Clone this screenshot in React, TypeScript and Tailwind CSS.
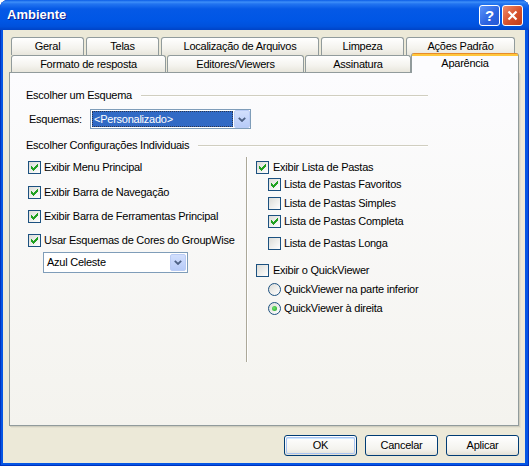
import React from "react";

function CheckMark() {
  return (
    <svg className="absolute left-0 top-0" width="11" height="11" viewBox="0 0 11 11" shapeRendering="crispEdges">
      <g fill="#21A121">
        <rect x="8" y="2" width="1" height="1" />
        <rect x="7" y="3" width="2" height="1" />
        <rect x="2" y="4" width="1" height="1" />
        <rect x="6" y="4" width="3" height="1" />
        <rect x="2" y="5" width="2" height="1" />
        <rect x="5" y="5" width="3" height="1" />
        <rect x="2" y="6" width="5" height="1" />
        <rect x="3" y="7" width="3" height="1" />
        <rect x="4" y="8" width="1" height="1" />
      </g>
    </svg>
  );
}

function Box({ checked }: { checked: boolean }) {
  return (
    <span className="relative block w-[13px] h-[13px] shrink-0 border border-[#1C5180] bg-[linear-gradient(135deg,#DCDCD7,#FFFFFF)]">
      {checked && <CheckMark />}
    </span>
  );
}

function Radio({ selected }: { selected: boolean }) {
  return (
    <span className="flex w-[13px] h-[13px] shrink-0 items-center justify-center rounded-full border border-[#1C5180] bg-[linear-gradient(135deg,#DCDCD7,#FFFFFF)]">
      {selected && <span className="block w-[5px] h-[5px] rounded-full bg-[radial-gradient(circle_at_40%_40%,#6EE36E,#21A121)]" />}
    </span>
  );
}

function CheckRow({ checked, label, gap = "ml-[3px]" }: { checked: boolean; label: string; gap?: string }) {
  return (
    <div className="flex h-[13px] items-center">
      <Box checked={checked} />
      <span className={`${gap} leading-[13px] whitespace-nowrap`}>{label}</span>
    </div>
  );
}

function RadioRow({ selected, label }: { selected: boolean; label: string }) {
  return (
    <div className="flex h-[13px] items-center">
      <Radio selected={selected} />
      <span className="ml-[3px] leading-[13px] whitespace-nowrap">{label}</span>
    </div>
  );
}

function DropBtn() {
  return (
    <div className="flex w-[16px] h-full shrink-0 items-center justify-center rounded-[2px] border border-[#BACCF5] bg-[linear-gradient(#D2DFFD,#B7CBF8)]">
      <svg width="8" height="5" viewBox="0 0 8 5">
        <polyline points="0.8,0.8 4,4 7.2,0.8" fill="none" stroke="#4D6185" strokeWidth="1.8" />
      </svg>
    </div>
  );
}

function Tab({ w, label, h = "h-[18px]" }: { w: string; label: string; h?: string }) {
  return (
    <div
      className={`${w} ${h} flex items-center justify-center rounded-t-[3px] border-x border-t border-[#919B9C] bg-[linear-gradient(#FFFFFF,#F4F3EE_60%,#E8E6DC)] leading-[13px] whitespace-nowrap`}
    >
      {label}
    </div>
  );
}

function Header({ label }: { label: string }) {
  return (
    <div className="flex h-[13px] w-[402px] items-center">
      <span className="leading-[13px] whitespace-nowrap">{label}</span>
      <div className="ml-[9px] flex-1 h-[2px] border-t border-[#D0CEC0] border-b border-b-white" />
    </div>
  );
}

function XPButton({ label, def = false }: { label: string; def?: boolean }) {
  return (
    <div className="w-[73px] h-[21px] rounded-[3px] border border-[#003C74] bg-[linear-gradient(#FFFFFF,#F4F3EE_70%,#E3E0D4)] p-[1px]">
      <div
        className={`flex h-full w-full items-center justify-center rounded-[2px] leading-[13px] ${
          def ? "shadow-[inset_0_0_0_1px_#A9C4F2,inset_0_1px_0_1px_#CEE7FF]" : ""
        }`}
      >
        {label}
      </div>
    </div>
  );
}

export default function App() {
  return (
    <div className="font-['Liberation_Sans',Arial,sans-serif] text-[11px] tracking-[-0.25px] text-black">
      <div className="flex h-[466px] w-[529px] flex-col overflow-hidden rounded-t-[8px] bg-[#0555E4] shadow-[inset_1px_0_#0033BE,inset_-1px_0_#0033BE,inset_0_-1px_#0033BE]">
        {/* Title bar */}
        <div className="flex h-[30px] shrink-0 items-center bg-[linear-gradient(#0A5CE6_0%,#3E8FF8_7%,#2274F0_13%,#0559E6_30%,#0056E5_70%,#0051DC_88%,#0043C6_100%)] pl-[7px] pr-[6px]">
          <span className="text-[13px] font-bold leading-[16px] tracking-normal text-white [text-shadow:1px_1px_#0A1A8A]">Ambiente</span>
          <div className="ml-auto flex gap-[2px]">
            <div className="flex h-[21px] w-[21px] items-center justify-center rounded-[3px] border border-white bg-[linear-gradient(135deg,#5A93FA,#2B63E0_60%,#2558D6)] text-[15px] font-bold leading-none tracking-normal text-white">
              ?
            </div>
            <div className="flex h-[21px] w-[21px] items-center justify-center rounded-[3px] border border-white bg-[linear-gradient(135deg,#EE8B6C,#D6502B_55%,#C23D1A)]">
              <svg width="11" height="11" viewBox="0 0 11 11">
                <path d="M1.5 1.5 L9.5 9.5 M9.5 1.5 L1.5 9.5" stroke="#FFFFFF" strokeWidth="2.2" />
              </svg>
            </div>
          </div>
        </div>

        {/* Client */}
        <div className="flex flex-1 flex-col pl-[3px] pr-[4px] pb-[3px]">
          <div className="flex flex-1 flex-col bg-[#ECE9D8] px-[6px] pt-[7px]">
            {/* Tabs */}
            <div className="flex h-[18px] gap-[2px] pl-[2px]">
              <Tab w="w-[73px]" label="Geral" />
              <Tab w="w-[73px]" label="Telas" />
              <Tab w="w-[158px]" label="Localização de Arquivos" />
              <Tab w="w-[83px]" label="Limpeza" />
              <Tab w="w-[109px]" label="Ações Padrão" />
            </div>
            <div className="flex h-[17px] items-end pl-[2px]">
              <Tab w="w-[155px]" h="h-[17px]" label="Formato de resposta" />
              <div className="w-[1px]" />
              <Tab w="w-[137px]" h="h-[17px]" label="Editores/Viewers" />
              <div className="w-[1px]" />
              <Tab w="w-[106px]" h="h-[17px]" label="Assinatura" />
              <div className="relative z-10 -mb-[1px] flex h-[20px] w-[108px] items-start justify-center rounded-t-[3px] border-x border-[#919B9C] bg-[linear-gradient(#E68B2C_0px,#E68B2C_1px,#FFC73C_1px,#FFC73C_3px,#FCFCFE_3px)] pt-[4px] leading-[13px]">
                Aparência
              </div>
            </div>

            {/* Panel */}
            <div className="h-[354px] border border-[#919B9C] bg-[linear-gradient(#FCFCFE,#F4F3EE)] shadow-[1px_1px_0_#D0CEBF,2px_2px_0_#E3E0D0]">
              <div className="pl-[16px] pt-[16px]">
                <Header label="Escolher um Esquema" />
                <div className="mt-[7px] flex items-center">
                  <span className="w-[64px] pl-[3px] leading-[13px]">Esquemas:</span>
                  <div className="flex h-[20px] w-[161px] border border-[#7F9DB9] bg-white">
                    <div className="flex-1 p-[1px]">
                      <div className="flex h-full items-center border border-dotted border-[#2A3550] bg-[#316AC5] pl-[1px] leading-[13px] text-white">
                        &lt;Personalizado&gt;
                      </div>
                    </div>
                    <DropBtn />
                  </div>
                </div>
                <div className="mt-[10px]">
                  <Header label="Escolher Configurações Individuais" />
                </div>
              </div>

              <div className="mt-[5px] flex">
                {/* Left column */}
                <div className="w-[236px] pl-[18px] pt-[4px]">
                  <CheckRow checked label="Exibir Menu Principal" />
                  <div className="mt-[12px]">
                    <CheckRow checked label="Exibir Barra de Navegação" />
                  </div>
                  <div className="mt-[11px]">
                    <CheckRow checked label="Exibir Barra de Ferramentas Principal" />
                  </div>
                  <div className="mt-[11px]">
                    <CheckRow checked label="Usar Esquemas de Cores do GroupWise" />
                  </div>
                  <div className="ml-[15px] mt-[5px] flex h-[21px] w-[145px] border border-[#7F9DB9] bg-white p-[1px]">
                    <div className="flex flex-1 items-center pl-[2px] leading-[13px]">Azul Celeste</div>
                    <DropBtn />
                  </div>
                </div>

                {/* Divider */}
                <div className="h-[205px] w-[2px] border-l border-[#ACA899] border-r border-r-white" />

                {/* Right column */}
                <div className="pl-[8px] pt-[4px]">
                  <CheckRow checked label="Exibir Lista de Pastas" gap="ml-[4px]" />
                  <div className="ml-[12px]">
                    <div className="mt-[4px]">
                      <CheckRow checked label="Lista de Pastas Favoritos" />
                    </div>
                    <div className="mt-[6px]">
                      <CheckRow checked={false} label="Lista de Pastas Simples" />
                    </div>
                    <div className="mt-[5px]">
                      <CheckRow checked label="Lista de Pastas Completa" />
                    </div>
                    <div className="mt-[9px]">
                      <CheckRow checked={false} label="Lista de Pastas Longa" />
                    </div>
                  </div>
                  <div className="mt-[14px]">
                    <CheckRow checked={false} label="Exibir o QuickViewer" gap="ml-[4px]" />
                  </div>
                  <div className="ml-[12px]">
                    <div className="mt-[6px]">
                      <RadioRow selected={false} label="QuickViewer na parte inferior" />
                    </div>
                    <div className="mt-[6px]">
                      <RadioRow selected label="QuickViewer à direita" />
                    </div>
                  </div>
                </div>
              </div>
            </div>

            {/* Buttons */}
            <div className="mt-[9px] flex justify-end gap-[8px]">
              <XPButton label="OK" def />
              <XPButton label="Cancelar" />
              <XPButton label="Aplicar" />
            </div>
          </div>
        </div>
      </div>
    </div>
  );
}
